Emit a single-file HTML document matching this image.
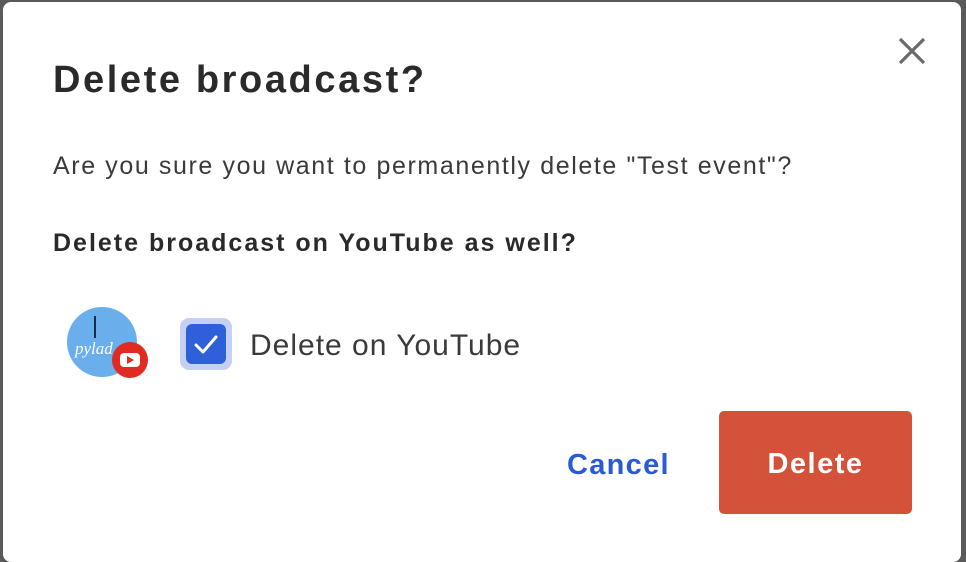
<!DOCTYPE html><html><head><style>
body{margin:0;width:966px;height:544px;background:#5a5a5a;overflow:hidden;font-family:"Liberation Sans",sans-serif;position:relative}
.dlg{position:absolute;left:3px;top:2px;width:958px;height:560px;background:#fff;border-radius:8px}
.t{position:absolute;left:50px;top:57px;font-size:38px;font-weight:bold;color:#2a2a2a;letter-spacing:2.6px}
.p{position:absolute;left:50px;top:150px;font-size:25px;color:#3a3a3a;letter-spacing:1.6px}
.s{position:absolute;left:50px;top:227px;font-size:25px;font-weight:bold;color:#2a2a2a;letter-spacing:2px}
.cb{position:absolute;left:177px;top:316px;width:52px;height:52px;border-radius:9px;background:#c5d0f5}
.cb div{position:absolute;left:6px;top:6px;width:40px;height:40px;border-radius:6px;background:#2f5fd9}
.l{position:absolute;left:247px;top:327px;font-size:30px;color:#3a3a3a;letter-spacing:1px}
.c{position:absolute;left:564px;top:447px;font-size:29px;font-weight:bold;color:#2a5bd7;letter-spacing:1.3px}
.b{position:absolute;left:716px;top:409px;width:193px;height:103px;background:#d4513a;border-radius:5px;color:#fff;font-size:29px;font-weight:bold;text-align:center;line-height:107px;letter-spacing:1.5px}
</style></head><body>
<div class="dlg">
<svg style="position:absolute;left:893px;top:33px" width="32" height="32"><path d="M4 4L28 28M28 4L4 28" stroke="#6a6a6a" stroke-width="3.2"/></svg>
<div class="t">Delete broadcast?</div>
<div class="p">Are you sure you want to permanently delete "Test event"?</div>
<div class="s">Delete broadcast on YouTube as well?</div>
<svg style="position:absolute;left:62px;top:304px" width="90" height="80">
<circle cx="37" cy="36" r="35" fill="#6aafec"/>
<line x1="30" y1="10" x2="30" y2="32" stroke="#1a2a4a" stroke-width="2"/>
<text x="10" y="48" font-size="17" font-style="italic" fill="#fff" font-family="Liberation Serif">pylad</text>
<circle cx="65" cy="54" r="18" fill="#e02a22"/>
<rect x="55" y="47" width="20" height="14" rx="4" fill="#fff"/>
<path d="M62 50L69 54L62 58Z" fill="#e02a22"/>
</svg>
<div class="cb"><div><svg width="40" height="40"><path d="M10 21L17 28L30 13" stroke="#fff" stroke-width="3" fill="none" stroke-linecap="round" stroke-linejoin="round"/></svg></div></div>
<div class="l">Delete on YouTube</div>
<div class="c">Cancel</div>
<div class="b">Delete</div>
</div>
</body></html>
